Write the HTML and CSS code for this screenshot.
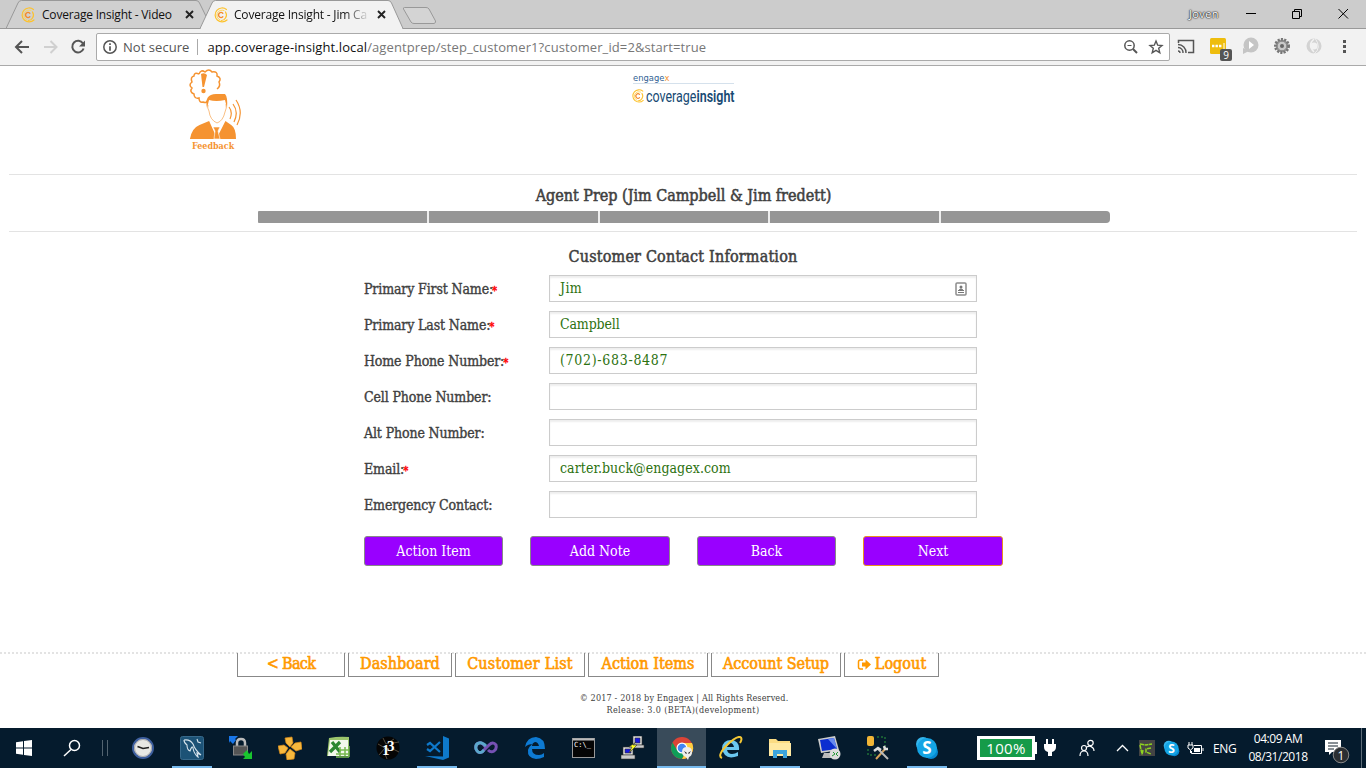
FILE: index.html
```html
<!DOCTYPE html>
<html lang="en">
<head>
<meta charset="utf-8">
<title>Coverage Insight - Jim Campbell</title>
<link rel="stylesheet" href="styles.css">
</head>
<body>
<svg class="defs" width="0" height="0">
  <defs>
    <symbol id="ci" viewBox="0 0 16 16"><g fill="none" stroke-linecap="round"><path d="M13.500 2.500A7 7 0 1 0 14 13" stroke="#fdc22d" stroke-width="1.200"/><path d="M11 3.500A5 5 0 1 0 7 13" stroke="#ffd75e"/><path d="M12.500 5q2 3 0 6q-1.500 2.500-4 2.500" stroke="#fdc22d" stroke-width="1.200"/><path d="M9.800 6.200A2.500 2.500 0 1 0 9.800 9.800" stroke="#f58a2a" stroke-width="1.300"/></g></symbol>
    <symbol id="skype" viewBox="0 0 24 24"><circle cx="8" cy="8" r="7" fill="#35b6ed"/><circle cx="16" cy="16" r="7" fill="#0687d0"/><circle cx="12" cy="12" r="10" fill="#14a4e4"/><text x="12" y="18" text-anchor="middle" class="skype-s">S</text></symbol>
  </defs>
</svg>

<div class="tabs">
  <div class="tab tab-back">
    <svg class="tab-shape" width="210" height="28"><path d="M0 28.500L12 3Q13 .5 15.500 .5H190Q192.500 .5 193.500 3L206 28.500" fill="#d0d0d0" stroke="#999"/></svg>
    <svg class="fav" width="16" height="16"><use href="#ci"/></svg><span class="tab-title">Coverage Insight - Video</span>
    <svg class="x" width="9" height="9"><path d="M1 1L8 8M8 1L1 8" stroke="#222" stroke-width="1.900"/></svg>
  </div>
  <div class="tab tab-front">
    <svg class="tab-shape" width="210" height="29"><path d="M0 28.500L12 3Q13 .5 15.500 .5H188Q190.500 .5 191.500 3L203 28.500" fill="#f2f2f2" stroke="#999"/><path d="M1 28.500H202" stroke="#f2f2f2"/></svg>
    <svg class="fav" width="16" height="16"><use href="#ci"/></svg><span class="tab-title fade">Coverage Insight - Jim Ca</span>
    <svg class="x" width="9" height="9"><path d="M1 1L8 8M8 1L1 8" stroke="#222" stroke-width="1.900"/></svg>
  </div>
  <svg class="newtab" width="36" height="19"><path d="M2.500 1.500H24Q26 1.500 27 3L33.500 15Q34 17 32 17.500H12Q10 17.500 9 16L1.500 3Q1 1.500 2.500 1.500" fill="#d4d4d4" stroke="#999"/></svg>
  <span class="user">Joven</span>
  <svg class="winctl" width="110" height="20" fill="none" stroke="#000"><path d="M3 9.500H13M49.500 7.500h7v7h-7zM51.500 7.500v-2h7v7h-2M95.500 5L105 14.500M105 5L95.500 14.500"/></svg>
</div>

<div class="toolbar">
  <svg width="92" height="24" class="navs" fill="none" stroke-width="2"><path d="M29 12H16M22 6L16 12L22 18" stroke="#555"/><path d="M44 12H56M50.500 6L56.500 12L50.500 18" stroke="#d0d0d0"/><path d="M83 8.500A5.800 5.800 0 1 0 83.600 13.500" stroke="#555"/><path d="M85 5.500V11.500H79z" fill="#555"/></svg>
  <div class="omnibox">
    <svg width="14" height="14" fill="none" stroke="#555"><circle cx="7" cy="7" r="6.200" stroke-width="1.500"/><path d="M7 6.200V10.800M7 3.200V5" stroke-width="1.700"/></svg>
    <span class="notsecure">Not secure</span><i class="pipe"></i>
    <span class="url">app.coverage-insight.local<span class="path">/agentprep/step_customer1?customer_id=2&amp;start=true</span></span>
    <svg class="omni-r" width="42" height="16" fill="none" stroke="#555"><circle cx="6.500" cy="6.500" r="4.700" stroke-width="1.500"/><path d="M10 10L14 14" stroke-width="2"/><path d="M4.500 6.500h4"/><path d="M33 2L34.700 6.200 39 6.500 35.700 9.300 36.800 13.800 33 11.400 29.200 13.800 30.300 9.300 27 6.500 31.300 6.200z" stroke-width="1.400"/></svg>
  </div>
  <svg class="exts" width="180" height="28" fill="none">
    <path d="M2.500 10V7.500H17.500V19.500H12" stroke="#555" stroke-width="1.500"/><path d="M2 11.500A8 8 0 0 1 10 20M2 14.500A5 5 0 0 1 7 20M2 18a2 2 0 0 1 2 2" stroke="#555" stroke-width="1.400"/>
    <rect x="34" y="5" width="16" height="16" rx="1.500" fill="#eebd0d"/><path d="M36 13h2.400M39.500 13h2.400M43 13h2.400" stroke="#fff" stroke-width="2.400"/><path d="M48 10v6" stroke="#fff"/><rect x="44" y="16" width="12" height="12" rx="2" fill="#555"/><text x="50" y="25.500" text-anchor="middle" class="badge">9</text>
    <circle cx="75" cy="12" r="7.500" fill="#c5c5c5"/><path d="M67 15v6l6-3" fill="#c5c5c5"/><path d="M73 8l5 4-5 4z" fill="#fff"/>
    <circle cx="106" cy="13" r="6.500" fill="#999" stroke="#777" stroke-width="3" stroke-dasharray="2 1.200"/><circle cx="106" cy="13" r="4.800" fill="#c9c9c9" stroke="#888"/><circle cx="106" cy="13" r="2" fill="#666"/>
    <circle cx="138" cy="13" r="5.500" stroke="#d3d3d3" stroke-width="4"/><path d="M138 6q-7 6 0 13" stroke="#f2f2f2" stroke-width="1.500"/><path d="M138 21q8-6 1-16" stroke="#f2f2f2" stroke-width="1"/>
    <path d="M167 7h3v3h-3zM167 12h3v3h-3zM167 17h3v3h-3z" fill="#555"/>
  </svg>
</div>

<main class="page">
  <header class="brand">
    <svg class="feedback" width="54" height="86" viewBox="0 0 54 86" fill="none" stroke="#f59331">
      <path d="M12 5q2-5 6-2q4-4 7 0q6-1 5 4q5 2 2 6q2 4-2 7M21 30q-1 5-5 3q-4 1-4-4q-5 1-5-4q-5-2-2-6q-4-3 0-6q-2-5 2-6q0-4 5-2" stroke-width="1.500"/>
      <path d="M14 5q3.500-2 6 1l-3 12h-1.500z" fill="#f59331" stroke="none"/><circle cx="16.500" cy="22" r="2.200" fill="#f59331" stroke="none"/>
      <path d="M20 39q-3-14 9-14h9q3 3 2 14l-2-8q-9 2-16 0z" fill="#f59331" stroke="none"/><path d="M21 36q-1 3 1 6q1 9 8 12q6-2 8-11q2-4 1-8" stroke-width=".6"/>
      <path d="M2 70q2-11 10-14l10-4 8 17 9-17 6 4q5 3 5 14z" fill="#f59331" stroke="none" transform="translate(1 0) scale(.96 1)"/><path d="M26 58h7l-2 4 2 8h-6l1-8z" fill="#f59331" stroke="#fff" stroke-width=".6"/>
      <path d="M42 38q4 5 1 12M46 35q6 8 1 18M49 31q8 12 1 25" stroke-width="1.200"/>
      <g transform="translate(5 79.500) scale(.8 1)"><text class="fb-text">Feedback</text></g>
    </svg>
    <div class="logo">
      <svg width="124" height="40"><g transform="translate(2 6.500) scale(1.05 1)"><text class="engage">engage<tspan class="or">x</tspan></text></g><path d="M2 9.500H103" stroke="#d5e1ec"/><use href="#ci" x="0" y="15" width="14" height="14"/><g transform="translate(15 28) scale(.78 1)"><text class="cov">coverage<tspan class="ins">insight</tspan></text></g></svg>
    </div>
  </header>

  <section class="prep">
    <h1>Agent Prep (Jim Campbell &amp; Jim fredett)</h1>
    <div class="steps"><i></i><i></i><i></i><i></i><i></i></div>
  </section>

  <h2>Customer Contact Information</h2>
  <form class="form">
    <div class="row"><label>Primary First Name:<b>*</b></label><div class="field"><span class="v1">Jim</span><svg width="12" height="14"><rect x="1" y="1" width="10" height="12" rx="1" fill="#fff" stroke="#8c8c8c" stroke-width="1.500"/><circle cx="6" cy="5" r="1.500" fill="#777"/><path d="M3 9q3-4 6 0M3 10.500h6" stroke="#777" fill="#777"/></svg></div></div>
    <div class="row"><label>Primary Last Name:<b>*</b></label><div class="field"><span class="v2">Campbell</span></div></div>
    <div class="row"><label>Home Phone Number:<b>*</b></label><div class="field"><span class="v3">(702)-683-8487</span></div></div>
    <div class="row"><label>Cell Phone Number:</label><div class="field"></div></div>
    <div class="row"><label>Alt Phone Number:</label><div class="field"></div></div>
    <div class="row"><label>Email:<b>*</b></label><div class="field"><span class="v4">carter.buck@engagex.com</span></div></div>
    <div class="row"><label>Emergency Contact:</label><div class="field"></div></div>
  </form>
  <div class="actions"><a>Action Item</a><a>Add Note</a><a>Back</a><a class="next">Next</a></div>

  <footer class="foot">
    <nav>
      <a class="n1">&lt; Back</a><a class="n2">Dashboard</a><a class="n3">Customer List</a><a class="n4">Action Items</a><a class="n5">Account Setup</a><a class="n6"><svg width="15" height="14"><path d="M6 2H3.500Q1.500 2 1.500 4V9Q1.500 11 3.500 11H6" fill="none" stroke="#f90" stroke-width="1.500"/><path d="M5 4.500H8.500V1.500L14 6.500L8.500 11.500V8.500H5z" fill="#f90"/></svg>Logout</a>
    </nav>
    <p class="copy">© 2017 - 2018 by Engagex | All Rights Reserved.</p>
    <p class="rel">Release: 3.0 (BETA)(development)</p>
  </footer>
</main>

<div class="taskbar">
  <div class="sys"><svg width="16" height="16" fill="#fff"><path d="M0 2.300L7 1.200V7.500H0zM8 1.100L16 0V7.500H8zM0 8.500H7V14.800L0 13.800zM8 8.500H16V16L8 14.900z"/></svg></div>
  <div class="sys"><svg width="18" height="18" fill="none" stroke="#fff" stroke-width="1.500"><circle cx="11.500" cy="6.500" r="5"/><path d="M8 10.500L1 17"/></svg></div>
  <div class="sep"></div>
  <div class="app"><svg width="24" height="24"><circle cx="12" cy="12" r="10" fill="#e8e8e4" stroke="#3e5f9f" stroke-width="2"/><circle cx="12" cy="12" r="8.500" fill="none" stroke="#aaa"/><path d="M6.500 10.500L12 12.500L18 11.500" stroke="#222" fill="none" stroke-width="1.500"/></svg></div>
  <div class="app open"><svg width="24" height="24"><rect x=".5" y=".5" width="23" height="23" rx="2" fill="#1c5276" stroke="#37698b"/><path d="M4 4q6-1 9 4q2 6 8 11l-4-2 1 4q-4-3-5-9q-1-3-3 3q-3-1-3-6Q4 7 4 4M17 3l1 3 3 1" stroke="#d6e3ec" fill="none" stroke-width="1.100"/></svg></div>
  <div class="app"><svg width="24" height="24"><path d="M8 11V7q0-4 4-4t4 4v4" fill="none" stroke="#bbb" stroke-width="2.500"/><rect x="4.500" y="10" width="14" height="9" fill="#555" stroke="#888"/><path d="M0 0h9l-3 3 1 1-3 4-3-3-1 2z" fill="#1976e8"/><path d="M23 23h-9l2-2-2-3 4-4 2 4 3-3z" fill="#19c52e"/></svg></div>
  <div class="app"><svg width="24" height="24" fill="#f8b83d" stroke="#d88a18" stroke-width=".7"><path d="M7 2l7-1 1 6-3 4-4-4zM13 11l4-4 6-1 1 7-6 2zM12 13l5 4-1 6-7 1-1-6zM10 12l-3 5-5 1-2-8 6-1z"/></svg></div>
  <div class="app"><svg width="24" height="24"><path d="M2 2Q12 0 22 1V20H0z" fill="#9bc56c"/><path d="M3 4h18v16H1z" fill="#f2f8eb"/><path d="M5 6L13 16M13 6L3 16" stroke="#2b8731" stroke-width="3.200"/><path d="M13 14h9M9 18h13M13 11v9M18 11v9M22 10v11M9 21h13" stroke="#75b84e" stroke-width="1.500"/></svg></div>
  <div class="app"><svg width="24" height="24"><circle cx="12" cy="12" r="11.500" fill="#050505"/><path d="M2 8l7 4-6 7M7 2l3 6 8-5M17 7l6-1M17 13l6 3M9 18l2 5" stroke="#6a604c" stroke-width=".8" fill="none"/><text x="6" y="19" class="bold-i">1</text><text x="11" y="15" class="bold-i">3</text></svg></div>
  <div class="app open"><svg width="24" height="24" fill="#0e79cb"><path d="M18 0L24 2.500V21.500L18 24L0 20L18 20.500z"/><path d="M15 6L5 15L2 13M15 16L5 7L2 9" fill="none" stroke="#0e79cb" stroke-width="2.200"/></svg></div>
  <div class="app"><svg width="24" height="16" fill="none" stroke-width="3"><path d="M12 8Q8 2 5 3Q1 4 2 9Q4 14 8 12L15 5Q19 1 22 5Q23 9 20 11Q17 13 14 10" stroke="#7651b3"/><path d="M12 6Q8 2 5 3Q1 4 2 9Q4 14 8 12L10 10" stroke="#5ba8cb"/></svg></div>
  <div class="app"><svg width="22" height="22" viewBox="0 0 22 22"><path d="M1 10Q3 0 12 0Q21 1 21 12H8Q8 18 15 18Q18 18 20 16V20Q16 22 12 22Q3 21 4 13Q5 9 9 7Q4 7 1 10M8 9H15Q14 5 11 5Q8 6 8 9" fill="#0d7ad3" fill-rule="evenodd"/></svg></div>
  <div class="app"><svg width="23" height="20"><rect x=".5" y=".5" width="22" height="19" fill="#050505" stroke="#999"/><path d="M1 1.500h21" stroke="#bbb" stroke-width="2"/><text x="2" y="9" class="cmd">C:\_</text></svg></div>
  <div class="app"><svg width="24" height="24" stroke="#333" stroke-width=".6"><path d="M12 0h9v9h-9z" fill="#ddd"/><path d="M14 2h5v5h-5z" fill="#1818e0"/><path d="M10 9h13v3H10z" fill="#ccc"/><path d="M2 11h10v8H2z" fill="#ddd"/><path d="M4 13h6v4H4z" fill="#1818e0"/><path d="M0 19h14v4H0z" fill="#ccc"/><path d="M15 6L8 11h3l-3 6 8-8h-4z" fill="#ff2"/></svg></div>
  <div class="app open current"><svg width="24" height="24"><circle cx="12" cy="12" r="11" fill="#db4437"/><path d="M2.500 6.500A11 11 0 0 0 12 23l5-9H7z" fill="#0f9d58"/><path d="M12 23A11 11 0 0 0 22 7H12l4.500 8z" fill="#ffcd40"/><circle cx="12" cy="12" r="5.500" fill="#fff"/><circle cx="12" cy="12" r="4.300" fill="#4285f4"/><path d="M12 16q0-5 5-5t5 5q0 4-3 5l-1 3-2-3q-4-1-4-5" fill="#eee"/><path d="M14 15l3 2-1 1zM21 15l-3 2 1 1z" fill="#222"/></svg></div>
  <div class="app"><svg width="24" height="24"><path d="M3 12Q4 4 12 4Q21 5 20 14H8Q9 18 13 18Q16 18 19 16V20Q5 25 3 12M8 11H15Q14 7 11.500 7Q9 7 8 11" fill="#6bc7ef" fill-rule="evenodd"/><path d="M3 22Q-2 20 7 10Q17 0 21 1Q24 2 21 7" fill="none" stroke="#f4c735" stroke-width="2"/></svg></div>
  <div class="app open"><svg width="22" height="20"><path d="M0 1H7L9 3H21V18H0z" fill="#fbdc83"/><path d="M0 5H22V18H0z" fill="#ffe9a2"/><path d="M4 20V12H18V20H14V16H8V20z" fill="#3da4dc"/></svg></div>
  <div class="app"><svg width="24" height="24"><path d="M1 3L18 0L22 14L4 17z" fill="#ccc"/><path d="M3 4L17 2L20 13L5 15z" fill="#0b2ed0"/><path d="M11 3l6-1 3 11z" fill="#668af0"/><path d="M7 17h8v5H5z" fill="#bbb"/><circle cx="18" cy="18" r="5.500" fill="#ddd"/><path d="M15 20l3-2-2-2M21 16l-2 2 2 2" stroke="#269b38" fill="none"/></svg></div>
  <div class="app"><svg width="24" height="24"><rect x="1" y="0" width="7" height="10" rx="2" fill="#f2b536"/><path d="M11 1h8v9M2 13v6h8" stroke="#2c9a3d" stroke-dasharray="2 2" fill="none"/><path d="M10 23L20 12" stroke="#d5a25a" stroke-width="2"/><path d="M12 13l10 10" stroke="#bbb" stroke-width="2"/><path d="M8 15l4-3 3 2M18 10l1 3 3 0" stroke="#ddd" stroke-width="2.500" fill="none"/></svg></div>
  <div class="app open"><svg width="24" height="24"><use href="#skype"/></svg></div>
  <div class="tray">
    <div class="batt">100%</div>
    <svg class="plug" width="12" height="18" fill="#fff"><path d="M2 0h2v5h4V0h2v5h2v3q0 4-4 5v4H4v-4Q0 12 0 8V5h2z"/></svg>
    <svg class="people" width="17" height="18" fill="none" stroke="#fff" stroke-width="1.200"><circle cx="11.500" cy="4" r="2.700"/><circle cx="5" cy="9" r="2.500"/><path d="M1 17q0-5 4-5t4 5M8 8q3-2 6 1 1 1 1 3"/></svg>
    <svg class="chev" width="13" height="8" fill="none" stroke="#fff" stroke-width="1.300"><path d="M1 7L6.500 1.500L12 7"/></svg>
    <svg class="green" width="16" height="16"><path d="M0 0h16v16H0z" fill="#444"/><path d="M1 4l6 1 6-1M12 8L7 9v3l5 2M1 5l2 9M4 10l-1 5" fill="none" stroke="#8fd51f" stroke-width="1.500" stroke-dasharray="4 .6"/></svg>
    <svg class="skype2" width="17" height="17"><use href="#skype"/></svg>
    <svg class="pwr" width="17" height="13" fill="none" stroke="#fff"><path d="M7 3.500H14.500V11.500H4.500V9M16 6v3"/><path d="M7 6h6v4H7z" fill="#fff" stroke="none"/><path d="M1 3h5v3L3.500 8 1 6zM2 0v3M5 0v3M3.500 8v3"/></svg>
    <span class="eng">ENG</span>
    <div class="clock"><span>04:09 AM</span><span>08/31/2018</span></div>
    <svg class="notif" width="26" height="26"><path d="M0 2h16v12H7l-3 3v-3H0z" fill="#fff"/><path d="M3 5h10M3 8h10M3 11h6" stroke="#14222f"/><circle cx="16" cy="17" r="7.800" fill="#2b2f33" stroke="#888"/><text x="16" y="21.500" text-anchor="middle" class="cnt">1</text></svg>
  </div>
</div>
</body>
</html>
```
FILE: styles.css
```css
* { box-sizing: border-box; }
body { margin: 0; width: 1366px; height: 768px; overflow: hidden; display: flex; flex-direction: column; background: #fff; font-family: "Open Sans", sans-serif; }
svg { display: block; flex: none; }
.defs { position: absolute; }
span, h1, h2, p, a, label { white-space: nowrap; }

.tabs { height: 29px; background: #ccc; border-bottom: 1px solid #999; display: flex; padding-left: 6px; flex: none; }
.tab { position: relative; display: flex; align-items: center; height: 29px; width: 194px; padding-left: 14px; }
.tab-front { z-index: 1; width: 196px; padding-left: 13px; }
.tab-shape { position: absolute; left: 0; top: 0; }
.fav, .tab-title, .x { position: relative; }
.tab-title { width: 134px; margin-left: 6px; font-size: 12px; letter-spacing: -.2px; color: #111; line-height: 28px; }
.tab-front .tab-title { margin-left: 5px; }
.fade { background: linear-gradient(90deg, #111 82%, #ddd); background-clip: text; color: transparent; }
.x { margin-left: 9px; }
.newtab { margin: 6px 0 0 6px; }
.user { margin-left: auto; font-size: 11px; line-height: 27px; color: #fff; letter-spacing: .4px; text-shadow: 0 0 1px #222, 0 0 1px #222, 0 0 2px #222; }
.winctl { margin: 4px 13px 0 24px; }

.toolbar { height: 37px; background: #f2f2f2; border-bottom: 1px solid #aaa; display: flex; align-items: center; flex: none; }
.navs { margin-right: 4px; }
.omnibox { width: 1074px; height: 28px; border: 1px solid #aaa; border-radius: 2px; background: #fff; display: flex; align-items: center; padding: 0 4px 0 6px; font-size: 13px; color: #555; }
.notsecure { margin-left: 6px; letter-spacing: .05px; }
.pipe { width: 1px; height: 16px; background: #aaa; margin: 0 9px 0 8px; }
.url { color: #111; letter-spacing: .1px; }
.path { color: #777; }
.omni-r { margin-left: auto; }
.exts { margin-left: 6px; }
.badge { font: 10px "Open Sans"; fill: #fff; }

.page { flex: 1; padding: 0 9px; color: #404040; font-family: "DejaVu Serif Condensed", "DejaVu Serif", serif; min-height: 0; font-stretch: condensed; }
.brand { display: flex; height: 108px; }
.feedback { margin: 3px 0 0 178px; }
.fb-text { font: bold 10px "DejaVu Serif", serif; fill: #f59331; stroke: none; }
.logo { margin: 8px 0 0 390px; }
.engage { font: 8px "DejaVu Sans", sans-serif; fill: #315f94; }
.or { fill: #f59331; }
.cov { font: 16px "Roboto", sans-serif; fill: #174a73; }
.ins { font-weight: 600; }
.prep { height: 58px; border: 1px solid #e3e3e3; border-width: 1px 0; display: flex; flex-direction: column; align-items: center; }
h1, h2 { margin: 0; font-size: 16px; font-weight: normal; -webkit-text-stroke: .5px; text-align: center; }
h1 { line-height: 22px; padding: 10px 0 0 1px; letter-spacing: -.02px; }
h2 { line-height: 22px; margin-top: 14px; letter-spacing: .18px; }
.steps { width: 852px; height: 12px; margin: 4px 0 0 2px; display: grid; grid-template-columns: repeat(5, 1fr); gap: 2px; background: #eee; border-radius: 1px 4px 4px 1px; overflow: hidden; }
.steps i { background: #969696; }
.form { margin: 7px 0 0 355px; display: grid; gap: 9px; }
.row { display: flex; height: 27px; }
label { width: 185px; font-size: 14px; line-height: 28px; letter-spacing: -.13px; -webkit-text-stroke: .35px; }
label b { color: #f00; font-size: 11px; margin-left: -1px; -webkit-text-stroke: .3px; }
.field { width: 428px; border: 1px solid #ccc; box-shadow: inset 0 2px 2px #eee; padding: 0 9px 0 10px; display: flex; justify-content: space-between; align-items: center; font-size: 14px; color: #2d7210; }
.field span { line-height: 22px; padding-bottom: 2px; }
.v1 { letter-spacing: .4px; }
.v2 { letter-spacing: -.15px; }
.v3 { letter-spacing: .7px; }
.v4 { letter-spacing: .06px; }
.actions { margin: 18px 0 0 355px; display: grid; grid-template-columns: 139px 140px 139px 140px; gap: 27px; }
.actions a { height: 30px; border: 1px solid #888; border-radius: 3px; background: #90f; color: #fff; font-size: 14px; line-height: 28px; text-align: center; letter-spacing: 0; }
.actions .next { border-color: #e89020; }
.foot { margin: 86px -9px 0; border-top: 2px dotted #e3e3e3; }
nav { display: flex; gap: 3px; margin: -1px 0 0 237px; }
nav a { height: 24px; border: 1px solid #888; border-top: 0; color: #f90; font-size: 16px; line-height: 22px; letter-spacing: .05px; -webkit-text-stroke: .6px; display: flex; justify-content: center; }
.n1 { width: 108px; letter-spacing: -.7px; } .n2 { width: 104px; } .n3 { width: 130px; letter-spacing: .2px; } .n4 { width: 120px; } .n5 { width: 130px; letter-spacing: -.05px; } .n6 { width: 95px; }
.n6 svg { margin: 5px 3px 0 0; }
.foot p { margin: 0; text-align: center; font-size: 9px; line-height: 12px; letter-spacing: .15px; padding-left: 2px; }
.foot .copy { margin-top: 15px; }
.foot .rel { letter-spacing: .38px; padding-left: 0; }

.taskbar { height: 40px; flex: none; display: flex; background: #051b2d; color: #fff; }
.sys { width: 48px; display: grid; place-items: center; }
.sep { width: 22px; display: flex; }
.sep::before { content: ""; margin: 12px 0 0 6px; width: 4px; height: 16px; border: 1px solid #526370; border-width: 0 1px; }
.app { width: 49px; display: grid; place-items: center; background-repeat: no-repeat; }
.open { background-image: linear-gradient(#76b9ed, #76b9ed); background-size: 40px 2px; background-position: center bottom; }
.current { background-color: #394b5a; background-size: 49px 2px; }
.tray { display: flex; align-items: center; padding-left: 26px; width: 411px; border-right: 1px solid #5d6c78; flex: none; }
.batt { position: relative; width: 58px; height: 24px; border: 3px solid #fff; background: #159b49; font: 15px/18px "Open Sans"; text-align: center; color: #fff; letter-spacing: .3px; }
.batt::after { content: ""; position: absolute; right: -5px; top: 3px; width: 2px; height: 12px; background: #fff; }
.plug { margin-left: 9px; }
.people { margin-left: 23px; }
.chev { margin-left: 20px; }
.green { margin-left: 10px; }
.skype2 { margin-left: 8px; }
.pwr { margin-left: 7px; }
.eng { margin-left: 9px; font-size: 12px; letter-spacing: -.4px; width: 25px; }
.clock { width: 62px; margin-left: 9px; display: grid; text-align: center; font-size: 12px; line-height: 18px; letter-spacing: -.45px; justify-content: center; }
.notif { margin: 5px 0 0 16px; }
.skype-s { font: bold 17px "Open Sans"; fill: #fff; }
.bold-i { font: bold 15px "Liberation Serif"; fill: #fff; }
.cmd { font: 7px "DejaVu Sans Mono"; fill: #fff; }
.cnt { font: 12px "Open Sans"; fill: #fff; }
```
